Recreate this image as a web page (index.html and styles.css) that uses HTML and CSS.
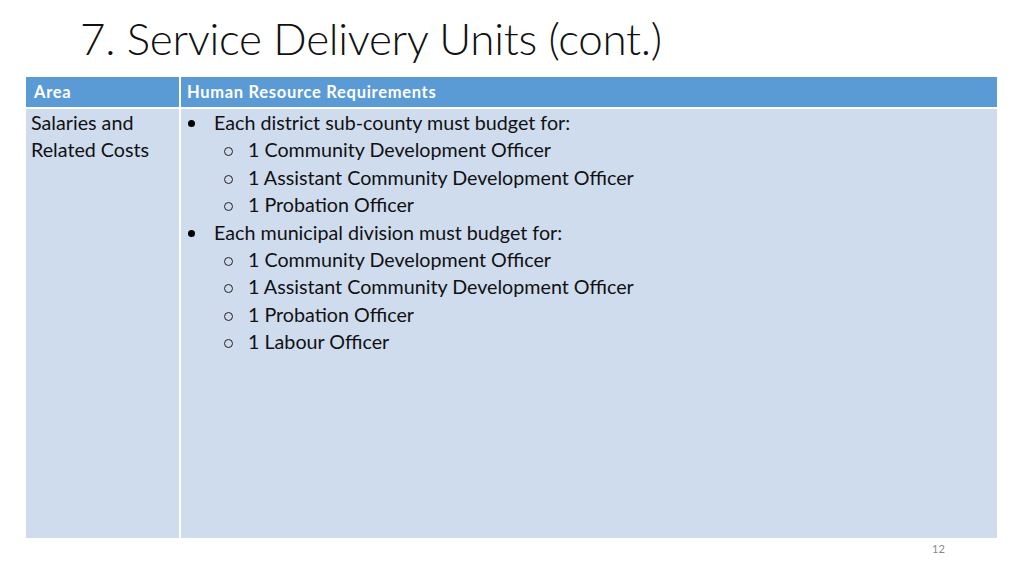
FILE: index.html
```html
<!DOCTYPE html>
<html>
<head>
<meta charset="utf-8">
<link rel="stylesheet" href="styles.css">
</head>
<body>
<div class="slide">
  <h1 class="title">7. Service Delivery Units (cont.)</h1>
  <div class="table">
    <div class="th th-area">Area</div>
    <div class="th th-req">Human Resource Requirements</div>
    <div class="td td-area">Salaries and<br>Related Costs</div>
    <div class="td td-req">
      <ul class="lvl1">
        <li>Each district sub-county must budget for:
          <ul class="lvl2">
            <li>1 Community Development Officer</li>
            <li>1 Assistant Community Development Officer</li>
            <li>1 Probation Officer</li>
          </ul>
        </li>
        <li>Each municipal division must budget for:
          <ul class="lvl2">
            <li>1 Community Development Officer</li>
            <li>1 Assistant Community Development Officer</li>
            <li>1 Probation Officer</li>
            <li>1 Labour Officer</li>
          </ul>
        </li>
      </ul>
    </div>
  </div>
  <div class="pagenum">12</div>
</div>
</body>
</html>
```

FILE: styles.css
```css
html, body {
  margin: 0;
  padding: 0;
  background: #ffffff;
}
.slide {
  width: 1024px;
  height: 576px;
  position: relative;
  font-family: "Lato", "Open Sans", sans-serif;
  color: #000;
  overflow: hidden;
}
.title {
  margin: 0;
  padding: 13px 0 0 80px;
  height: 61px;
  box-sizing: border-box;
  font-weight: 300;
  font-size: 44px;
  line-height: 50px;
  color: #111;
  letter-spacing: -0.3px;
}
.table {
  margin: 16px 0 0 26px;
  width: 971px;
  display: grid;
  grid-template-columns: 153px 1fr;
  grid-template-rows: 30px 429px;
  gap: 2px;
  background: #ffffff;
}
.th {
  background: #5b9bd5;
  color: #ffffff;
  font-weight: 700;
  font-size: 16.5px;
  letter-spacing: 0.7px;
  line-height: 30px;
  padding-left: 8px;
}
.th-req {
  padding-left: 6px;
}
.td {
  background: #cfdcee;
  font-size: 19.7px;
  line-height: 27.4px;
  color: #111;
  padding-top: 0;
}
.td-area {
  padding-left: 5px;
}
ul {
  list-style: none;
  margin: 0;
  padding: 0;
}
.lvl1 > li {
  position: relative;
  padding-left: 33px;
}
.lvl1 > li::before {
  content: "";
  position: absolute;
  left: 7px;
  top: 11px;
  width: 7px;
  height: 7px;
  border-radius: 50%;
  background: #000;
}
.lvl2 > li {
  position: relative;
  padding-left: 34px;
}
.lvl2 > li::before {
  content: "";
  position: absolute;
  left: 10px;
  top: 11px;
  width: 9px;
  height: 9px;
  border: 1.3px solid #222;
  border-radius: 50%;
  box-sizing: border-box;
}
.pagenum {
  position: absolute;
  left: 932px;
  top: 542px;
  font-size: 11px;
  color: #888;
}
```
